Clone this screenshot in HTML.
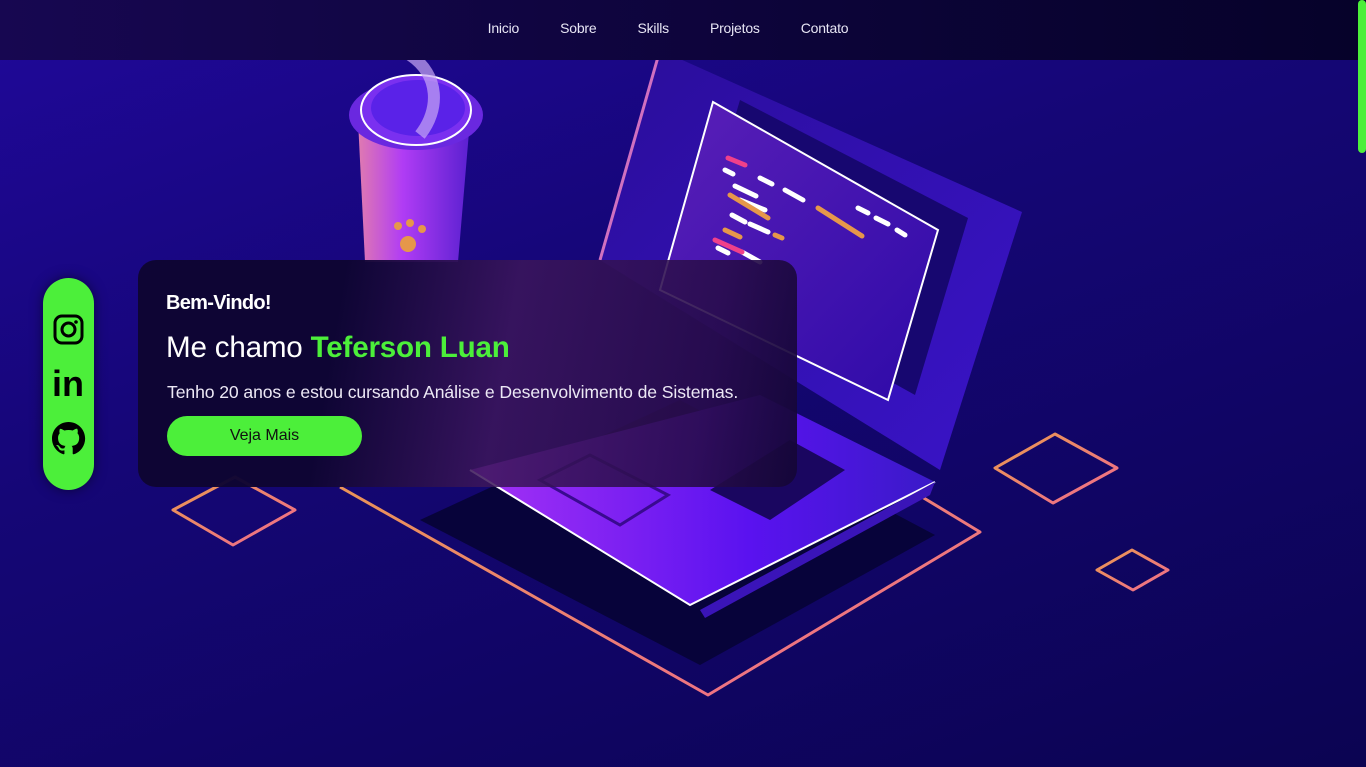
<!DOCTYPE html>
<html><head><meta charset="utf-8"><style>
*{margin:0;padding:0;box-sizing:border-box}
body{width:1366px;height:767px;overflow:hidden;font-family:"Liberation Sans",sans-serif;background:linear-gradient(160deg,#20089a 0%,#150676 40%,#0b0452 100%);position:relative}
nav{position:absolute;left:0;top:0;width:1366px;height:60px;background:linear-gradient(90deg,#170751,#0c0438 60%,#06022a);z-index:5;text-align:center;padding-right:30px}
nav a{color:#e8e6f5;font-size:14px;text-decoration:none;line-height:57px;margin:0 20.5px;letter-spacing:-.2px}
svg.art{position:absolute;left:0;top:0}
.card{position:absolute;left:138px;top:260px;width:659px;height:227px;border-radius:18px;background:linear-gradient(100deg,rgba(14,5,50,.97) 30%,rgba(60,22,90,.85) 55%,rgba(40,12,75,.9) 85%,rgba(20,6,55,.95));z-index:3;color:#fff}
.card h4{position:absolute;left:28px;top:32px;font-size:20px;font-weight:bold;letter-spacing:-.7px}
.card h1{position:absolute;left:28px;top:71px;font-size:29.6px;font-weight:normal;letter-spacing:-.2px;white-space:nowrap}
.card h1 b{color:#4cef3a}
.card p{position:absolute;left:29px;top:122px;font-size:17.6px;color:#ece8f5;white-space:nowrap;letter-spacing:-.1px}
.btn{position:absolute;left:29px;top:156px;width:195px;height:40px;border-radius:20px;background:#4cef3a;color:#111;font-size:16px;text-align:center;line-height:40px}
.soc{position:absolute;left:43px;top:278px;width:51px;height:212px;border-radius:26px;background:#4cef3a;z-index:3;box-shadow:0 0 12px rgba(0,0,0,.5)}
.scroll{position:absolute;right:0;top:0;width:8px;height:153px;background:#4cef3a;border-radius:4px;z-index:6}
</style></head><body>
<nav><a>Inicio</a><a>Sobre</a><a>Skills</a><a>Projetos</a><a>Contato</a></nav>
<div class="scroll"></div>
<svg class="art" width="1366" height="767">
<defs>
<linearGradient id="o" x1="0" y1="0" x2="1" y2="1"><stop offset="0" stop-color="#e99a4e"/><stop offset="1" stop-color="#f06a90"/></linearGradient>
<linearGradient id="lid" x1="0" y1="0" x2="1" y2="1"><stop offset="0" stop-color="#2a0d9a"/><stop offset="1" stop-color="#3a14c8"/></linearGradient>
<linearGradient id="scr" x1="0" y1="0" x2="1" y2="1"><stop offset="0" stop-color="#5a1fb8"/><stop offset="1" stop-color="#2e0aa8"/></linearGradient>
<linearGradient id="base" x1="0" y1="0" x2="1" y2="0"><stop offset="0" stop-color="#a632f5"/><stop offset=".6" stop-color="#5a12f0"/><stop offset="1" stop-color="#3a1ac8"/></linearGradient>
<linearGradient id="cup" x1="0" y1="0" x2="1" y2="0"><stop offset="0" stop-color="#e07ab0"/><stop offset=".4" stop-color="#b03cf5"/><stop offset="1" stop-color="#5a20d0"/></linearGradient>
</defs>
<g fill="none" stroke="url(#o)" stroke-width="3" stroke-linejoin="round">
<path d="M340 487 L708 695 L980 532 L770 405"/>
<path d="M173 510 L233 545 L295 510 L235 477 Z"/>
<path d="M995 468 L1053 503 L1117 468 L1055 434 Z"/>
<path d="M1097 570 L1133 590 L1168 570 L1132 550 Z"/>
</g>
<path d="M420 520 L700 665 L935 535 L680 400 Z" fill="#07033a"/>
<path d="M660 50 L1022 212 L940 470 L600 260 Z" fill="url(#lid)"/>
<path d="M660 50 L600 260" stroke="#d070c0" stroke-width="3"/>
<path d="M740 100 L968 218 L915 395 L690 270 Z" fill="#170770"/>
<path d="M713 102 L938 230 L888 400 L660 290 Z" fill="url(#scr)" stroke="#fff" stroke-width="2"/>
<g stroke-width="5" stroke-linecap="round">
<path d="M728 158 L745 165" stroke="#f0408a"/><path d="M725 170 L733 174 M760 178 L772 184 M785 190 L803 200 M735 186 L756 196 M740 200 L765 210 M858 208 L868 213 M876 218 L888 224 M897 230 L905 235 M732 215 L745 222 M750 224 L768 232 M718 248 L728 253 M742 252 L760 262" stroke="#fff"/>
<path d="M730 195 L768 218 M818 208 L862 236 M725 230 L740 237 M775 235 L782 238" stroke="#e6974a"/>
<path d="M715 240 L742 252" stroke="#f0408a"/>
</g>
<path d="M470 470 L690 605 L935 482 L760 395 Z" fill="url(#base)"/>
<path d="M470 470 L690 605 L935 482" fill="none" stroke="#fff" stroke-width="2"/>
<path d="M700 610 L935 482 L930 495 L705 618Z" fill="#3a14b8"/>
<path d="M540 480 L620 525 L668 495 L590 455Z" fill="none" stroke="#3a0a90" stroke-width="3"/>
<path d="M710 490 L770 520 L845 470 L790 440Z" fill="#1a0660"/>
<path d="M358 120 L470 120 L458 262 L365 262 Z" fill="url(#cup)"/>
<ellipse cx="416" cy="115" rx="67" ry="35" fill="#6a28e0"/>
<ellipse cx="416" cy="110" rx="55" ry="35" fill="#7a30f0" stroke="#fff" stroke-width="2"/>
<ellipse cx="418" cy="108" rx="47" ry="28" fill="#5a22e8"/>
<path d="M410 55 C440 75 440 110 420 135" stroke="#c7a6f5" stroke-width="12" fill="none" opacity=".7"/>
<circle cx="408" cy="244" r="8" fill="#e6974a"/><circle cx="398" cy="226" r="4" fill="#e6974a"/><circle cx="410" cy="223" r="4" fill="#e6974a"/><circle cx="422" cy="229" r="4" fill="#e6974a"/>
</svg>
<div class="soc">
<svg width="51" height="212" viewBox="0 0 51 212">
<rect x="12" y="38" width="27" height="27" rx="7" fill="none" stroke="#000" stroke-width="3"/>
<circle cx="25.5" cy="51.5" r="6.5" fill="none" stroke="#000" stroke-width="3"/><circle cx="33" cy="44" r="1.8"/>
<text x="9" y="118" font-family="Liberation Sans" font-weight="bold" font-size="36">in</text>
<path transform="translate(9,144) scale(2.07)" d="M8 0C3.58 0 0 3.58 0 8c0 3.54 2.29 6.53 5.47 7.59.4.07.55-.17.55-.38 0-.19-.01-.82-.01-1.49-2.01.37-2.53-.49-2.690-.94-.09-.23-.48-.94-.82-1.13-.28-.15-.68-.52-.01-.53.63-.01 1.08.58 1.23.82.72 1.21 1.87.87 2.33.66.07-.52.28-.87.51-1.07-1.78-.2-3.640-.89-3.640-3.95 0-.87.31-1.59.82-2.15-.08-.2-.36-1.02.08-2.12 0 0 .67-.21 2.2.82.64-.18 1.32-.27 2-.27.68 0 1.36.09 2 .27 1.53-1.04 2.2-.82 2.2-.82.44 1.1.16 1.92.08 2.12.51.56.82 1.27.82 2.15 0 3.07-1.87 3.75-3.65 3.95.29.25.54.73.54 1.48 0 1.07-.01 1.93-.01 2.2 0 .21.15.46.55.38A8.013 8.013 0 0 0 16 8c0-4.42-3.58-8-8-8z"/>
</svg></div>
<div class="card">
<h4>Bem-Vindo!</h4>
<h1>Me chamo <b>Teferson Luan</b></h1>
<p>Tenho 20 anos e estou cursando Análise e Desenvolvimento de Sistemas.</p>
<div class="btn">Veja Mais</div>
</div>
</body></html>
